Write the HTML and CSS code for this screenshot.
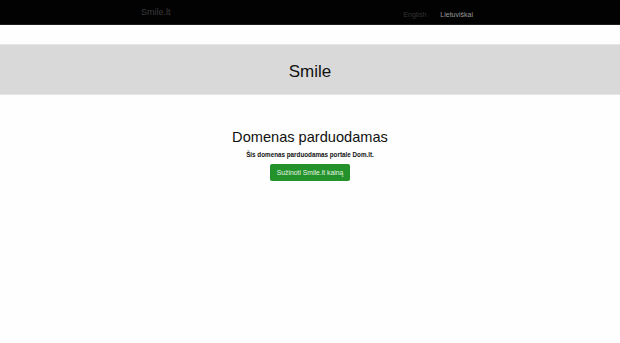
FILE: index.html
```html
<!DOCTYPE html>
<html>
  <head>
    <meta name="viewport" content="width=device-width, initial-scale=1" />
    <title>Smile.lt</title>
    <link rel="stylesheet" href="styles.css">
  </head>

  <body>
    <nav class="navbar">
      <div class="container navbar-inner">
        <a class="brand" href="#">Smile.lt</a>
        <ul class="lang">
          <li><a href="#" class="lang-off">English</a></li>
          <li><a href="#" class="lang-on">Lietuviškai</a></li>
        </ul>
      </div>
    </nav>

    <header class="jumbotron">
      <h1>Smile</h1>
    </header>

    <main class="content">
      <h2>Domenas parduodamas</h2>
      <p class="lead">Šis domenas parduodamas portale Dom.lt.</p>
      <a href="#" class="btn-success">Sužinoti Smile.lt kainą</a>
    </main>
  </body>
</html>
```

FILE: styles.css
```css
/* ------------------------------ reset ------------------------------ */
* {
  margin: 0;
  padding: 0;
  box-sizing: border-box;
}
body {
  font-family: "Liberation Sans", Arial, sans-serif;
  background: #fefefe;
  color: #111;
}
a {
  text-decoration: none;
}
ul {
  list-style: none;
}

/* ------------------------------ navbar ------------------------------ */
.navbar {
  background: #020202;
  border-bottom: 1px solid #1e1e1e;
  height: 25px;
}
.container {
  width: 350px;
  margin: 0 auto;
  padding: 0 6px;
}
.navbar-inner {
  display: flex;
  align-items: center;
  justify-content: space-between;
  height: 24px;
}
.brand {
  font-size: 9px;
  color: #3a3a3a;
}
.lang {
  display: flex;
  gap: 14px;
  margin-right: 6px;
}
.lang a {
  font-size: 7px;
}
.lang-off {
  color: #333;
}
.lang-on {
  color: #9a9a9a;
}

/* ------------------------------ jumbotron ------------------------------ */
.jumbotron {
  margin-top: 19px;
  height: 51px;
  background: #d9d9d9;
  border-top: 1px solid #e6e6e6;
  border-bottom: 1px solid #e6e6e6;
  display: flex;
  align-items: center;
  justify-content: center;
  padding-top: 5px;
}
.jumbotron h1 {
  font-size: 17px;
  font-weight: normal;
  color: #111;
}

/* ------------------------------ content ------------------------------ */
.content {
  display: flex;
  flex-direction: column;
  align-items: center;
  padding-top: 33px;
}
.content h2 {
  font-size: 14.6px;
  font-weight: normal;
  line-height: 18px;
}
.lead {
  font-size: 6.3px;
  font-weight: bold;
  margin-top: 4px;
  line-height: 9px;
}
.btn-success {
  margin-top: 5px;
  display: inline-block;
  background: #23922a;
  color: #e6f3e6;
  font-size: 6.8px;
  height: 17px;
  line-height: 17px;
  padding: 0 6.5px;
  border-radius: 2px;
}
```
